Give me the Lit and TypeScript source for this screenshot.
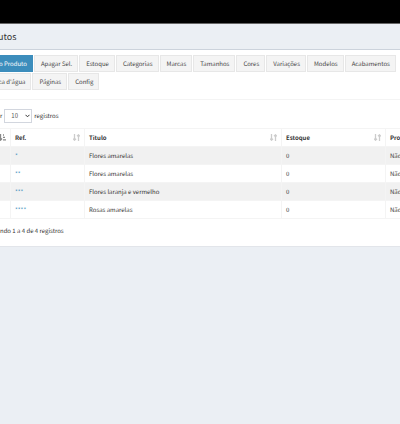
import { LitElement, html, css, svg } from "lit";
import { customElement, state } from "lit/decorators.js";

interface Product {
  ref: string;
  title: string;
  stock: number;
  promo: string;
}

const actions = [
  ["Novo Produto", "Apagar Sel.", "Estoque", "Categorias", "Marcas", "Tamanhos", "Cores", "Variações", "Modelos", "Acabamentos"],
  ["Marca d'água", "Páginas", "Config"],
];

const products: Product[] = [
  { ref: "*", title: "Flores amarelas", stock: 0, promo: "Não" },
  { ref: "**", title: "Flores amarelas", stock: 0, promo: "Não" },
  { ref: "***", title: "Flores laranja e vermelho", stock: 0, promo: "Não" },
  { ref: "****", title: "Rosas amarelas", stock: 0, promo: "Não" },
];

@customElement("app-root")
export class AppRoot extends LitElement {
  @state() private pageSize = "10";

  static styles = css`
    :host {
      display: block;
      min-height: 100vh;
      overflow: hidden;
      background: #ebeff4;
      color: #333;
      font: 6px/10px "Noto Sans CJK JP", "Noto Sans", sans-serif;
      text-rendering: geometricPrecision;
    }
    * {
      box-sizing: border-box;
    }
    .topbar {
      height: 24px;
      background: #000;
      border-bottom: 1px solid #666;
    }
    /* The page is scrolled a little to the right of its start. */
    .page {
      margin-left: -26px;
      margin-right: -80px;
    }
    .title {
      margin: 0;
      padding: 6px 4px;
      font-size: 9px;
      line-height: 13px;
      font-weight: 400;
      border-bottom: 1px solid #ccd3dc;
    }
    .panel {
      background: #fff;
      border-bottom: 1px solid #e2e5ea;
      padding-bottom: 10px;
    }
    .actions {
      display: flex;
      flex-direction: column;
      gap: 1px;
      padding: 5px 7px 9px;
      border-bottom: 1px solid #f4f4f4;
    }
    .line {
      display: flex;
      gap: 1px;
    }
    .btn {
      flex: none;
      height: 17px;
      padding: 0 5px 0 6px;
      border: 1px solid #e7e7e7;
      background: #f4f4f4;
      color: #444;
      font: inherit;
      text-rendering: inherit;
      white-space: nowrap;
    }
    .btn.primary {
      background: #3c8dbc;
      border-color: #3c8dbc;
      color: #fff;
    }
    .body {
      padding: 9px 7px 0;
    }
    .length {
      display: flex;
      align-items: center;
      gap: 2px;
      height: 14px;
      margin-bottom: 5px;
    }
    .picker {
      position: relative;
      display: flex;
    }
    .picker svg {
      position: absolute;
      right: 2px;
      top: 5px;
      width: 5px;
      height: 4px;
      pointer-events: none;
    }
    select {
      appearance: none;
      width: 28px;
      height: 14px;
      padding: 0 6px;
      border: 1px solid #d2d6de;
      border-radius: 0;
      background: #fff;
      color: #555;
      font: inherit;
    }
    table {
      width: 100%;
      table-layout: fixed;
      border-collapse: collapse;
    }
    .c-check {
      width: 29px;
    }
    .c-ref {
      width: 74px;
    }
    .c-title {
      width: 197px;
    }
    .c-stock {
      width: 104px;
    }
    th,
    td {
      height: 18px;
      padding: 0 4px;
      border: 1px solid #f4f4f4;
      text-align: left;
      white-space: nowrap;
    }
    th {
      font-weight: 700;
      color: #333;
    }
    tbody tr:nth-child(odd) {
      background: #f1f1f1;
    }
    .head {
      display: flex;
      align-items: center;
      justify-content: space-between;
    }
    .sort {
      width: 7px;
      height: 7px;
      fill: none;
      stroke: #ccc;
      stroke-width: 1.3;
    }
    .sort.active {
      stroke: #888;
    }
    a {
      color: #3c8dbc;
      text-decoration: none;
    }
    .info {
      margin: 0;
      padding-top: 7px;
    }
  `;

  private sortIcon(active = false) {
    return html`<svg class="sort ${active ? "active" : ""}" viewBox="0 0 7 7" aria-hidden="true">
      ${active
        ? svg`<path d="M1.5 0V6M0 4.5L1.5 6.2L3 4.5M4 1H5M4 3.3H6M4 5.8H7" />`
        : svg`<path d="M1.5 0V6M0 4.7L1.5 6.2L3 4.7M5.5 7V1M4 2.3L5.5 .8L7 2.3" />`}
    </svg>`;
  }

  private head(label: string) {
    return html`<th scope="col"><div class="head">${label}${this.sortIcon()}</div></th>`;
  }

  render() {
    return html`
      <header class="topbar"></header>
      <main class="page">
        <h1 class="title">Produtos</h1>
        <section class="panel">
          <div class="actions">
            ${actions.map(
              (line, r) => html`<div class="line">
                ${line.map((label, i) => html`<button type="button" class="btn ${r + i === 0 ? "primary" : ""}">${label}</button>`)}
              </div>`
            )}
          </div>
          <div class="body">
            <div class="length">
              <label for="size">Mostrar</label>
              <span class="picker">
                <select id="size" aria-label="Mostrar registros" .value=${this.pageSize}
                  @change=${(e: Event) => (this.pageSize = (e.target as HTMLSelectElement).value)}>
                  <option>10</option>
                  <option>25</option>
                  <option>50</option>
                </select>
                <svg viewBox="0 0 5 4" fill="none" stroke="#333" aria-hidden="true"><path d="M.5 .8L2.5 2.8L4.5 .8" /></svg>
              </span>
              <span>registros</span>
            </div>
            <table>
              <colgroup>
                <col class="c-check" />
                <col class="c-ref" />
                <col class="c-title" />
                <col class="c-stock" />
                <col />
              </colgroup>
              <thead>
                <tr>
                  <th scope="col" aria-label="Seleção"><div class="head"><span></span>${this.sortIcon(true)}</div></th>
                  ${["Ref.", "Titulo", "Estoque", "Promoção"].map((l) => this.head(l))}
                </tr>
              </thead>
              <tbody>
                ${products.map(
                  (p) => html`<tr>
                    <td></td>
                    <td><a href="#">${p.ref}</a></td>
                    <td>${p.title}</td>
                    <td>${p.stock}</td>
                    <td>${p.promo}</td>
                  </tr>`
                )}
              </tbody>
            </table>
            <p class="info">Mostrando 1 a 4 de 4 registros</p>
          </div>
        </section>
      </main>
    `;
  }
}
